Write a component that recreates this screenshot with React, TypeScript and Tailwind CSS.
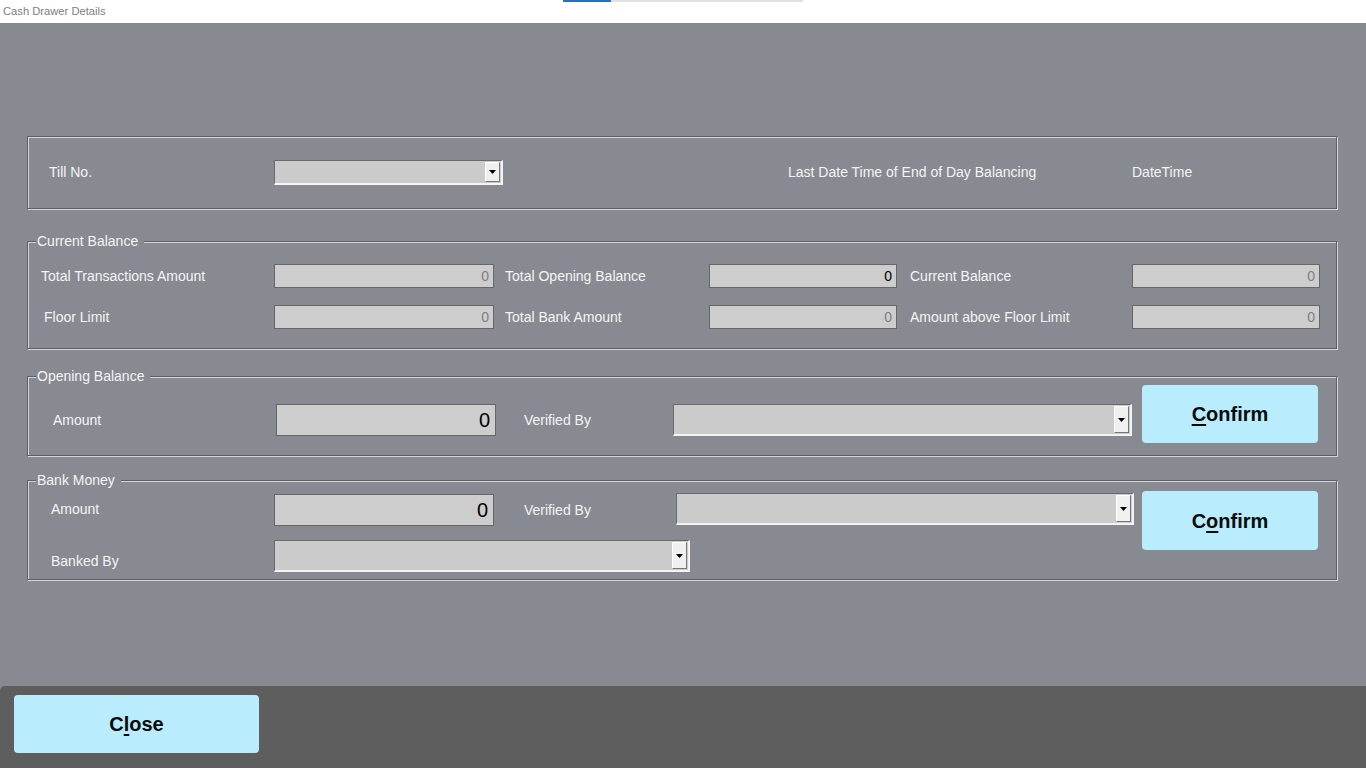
import React from "react";

const font = { fontFamily: '"Liberation Sans", Arial, sans-serif' };

function Group({ title, className, children }: { title?: string; className?: string; children: React.ReactNode }) {
  return (
    <div
      className={
        "relative border border-[#5d6066] shadow-[inset_1px_1px_0_#d4d5d8,1px_1px_0_#d4d5d8] " + (className || "")
      }
    >
      {title && (
        <span className="absolute left-[8px] top-[-9px] bg-[#878a91] pl-[1px] pr-[6px] text-[14px] leading-[16px] text-[#f4f4f4]">
          {title}
        </span>
      )}
      {children}
    </div>
  );
}

function TextBox({ w, h, value, dark, big }: { w: number; h: number; value: string; dark?: boolean; big?: boolean }) {
  return (
    <div
      className={
        "flex shrink-0 items-center justify-end border border-[#666] bg-[#cdcdcd] " +
        (big ? "pr-[5px] text-[20px] text-black" : "pr-[4px] text-[14px] " + (dark ? "text-black" : "text-[#7f7f7f]"))
      }
      style={{ width: w, height: h }}
    >
      {value}
    </div>
  );
}

function Combo({ w, h }: { w: number; h: number }) {
  return (
    <div
      className="flex shrink-0 items-stretch justify-end border-t border-l border-t-[#6a6a6a] border-l-[#6a6a6a] border-b-2 border-r-2 border-b-[#f4f4f4] border-r-[#f4f4f4] bg-[#cbcbcb] p-[1px]"
      style={{ width: w, height: h }}
    >
      <div className="flex w-[15px] items-center justify-center border-t border-l border-t-white border-l-white border-b border-r border-b-[#777] border-r-[#777] bg-[#f0f0f0]">
        <svg width="7" height="4" viewBox="0 0 7 4">
          <path d="M0 0H7L3.5 4Z" fill="#000" />
        </svg>
      </div>
    </div>
  );
}

function Label({ w, children, className }: { w: number; children: React.ReactNode; className?: string }) {
  return (
    <div className={"shrink-0 whitespace-nowrap text-[14px] text-[#f4f4f4] " + (className || "")} style={{ width: w }}>
      {children}
    </div>
  );
}

function BigButton({ w, h, children }: { w: number; h: number; children: React.ReactNode }) {
  return (
    <button
      className="flex shrink-0 items-center justify-center rounded-[4px] bg-[#b9ecfd] text-[20px] font-bold text-[#0a0a0a]"
      style={{ width: w, height: h, ...font }}
    >
      {children}
    </button>
  );
}

export default function App() {
  return (
    <div className="flex h-screen w-full flex-col overflow-hidden" style={font}>
      {/* title bar */}
      <div className="relative h-[23px] shrink-0 bg-white">
        <div className="absolute left-[563px] top-0 h-[2px] w-[48px] bg-[#2b6fbd]" />
        <div className="absolute left-[611px] top-0 h-[2px] w-[192px] bg-[#e1e1e1]" />
        <div className="pl-[3px] pt-[4px] text-[11.2px] leading-[14px] text-[#808080]">Cash Drawer Details</div>
      </div>

      {/* main */}
      <div className="flex flex-1 flex-col bg-[#878a91] pl-[27px] pt-[113px]">
        {/* Till row */}
        <Group className="h-[73px] w-[1310px]">
          <div className="flex h-full items-center pl-[21px] pb-[1px]">
            <Label w={225}>Till No.</Label>
            <Combo w={229} h={25} />
            <div className="w-[285px] shrink-0" />
            <Label w={344}>Last Date Time of End of Day Balancing</Label>
            <Label w={100}>DateTime</Label>
          </div>
        </Group>

        {/* Current Balance */}
        <Group title="Current Balance" className="mt-[32px] h-[108px] w-[1310px]">
          <div className="flex flex-col gap-[17px] pl-[13px] pt-[22px]">
            <div className="flex h-[24px] items-center">
              <Label w={233}>Total Transactions Amount</Label>
              <TextBox w={220} h={24} value="0" />
              <Label w={215} className="pl-[11px]">Total Opening Balance</Label>
              <TextBox w={188} h={24} value="0" dark />
              <Label w={235} className="pl-[13px]">Current Balance</Label>
              <TextBox w={188} h={24} value="0" />
            </div>
            <div className="flex h-[24px] items-center">
              <Label w={233} className="pl-[3px]">Floor Limit</Label>
              <TextBox w={220} h={24} value="0" />
              <Label w={215} className="pl-[11px]">Total Bank Amount</Label>
              <TextBox w={188} h={24} value="0" />
              <Label w={235} className="pl-[13px]">Amount above Floor Limit</Label>
              <TextBox w={188} h={24} value="0" />
            </div>
          </div>
        </Group>

        {/* Opening Balance */}
        <Group title="Opening Balance" className="mt-[27px] h-[80px] w-[1310px]">
          <div className="flex items-start pl-[25px] pt-[8px]">
            <div className="mt-[19px] flex h-[32px] items-center">
              <Label w={223}>Amount</Label>
              <TextBox w={220} h={32} value="0" big />
              <Label w={177} className="pl-[28px]">Verified By</Label>
              <Combo w={459} h={32} />
            </div>
            <div className="ml-[10px]">
              <BigButton w={176} h={58}>
                <span>
                  <span className="underline decoration-[2px] underline-offset-[3px]">C</span>onfirm
                </span>
              </BigButton>
            </div>
          </div>
        </Group>

        {/* Bank Money */}
        <Group title="Bank Money" className="mt-[24px] h-[100px] w-[1310px]">
          <div className="flex items-start pl-[23px] pt-[10px]">
            <div className="flex flex-col">
              <div className="mt-[3px] flex h-[32px] items-center">
                <Label w={223} className="pb-[2px]">Amount</Label>
                <TextBox w={220} h={32} value="0" big />
                <Label w={182} className="pl-[30px]">Verified By</Label>
                <div className="-mt-[2px]">
                  <Combo w={458} h={32} />
                </div>
              </div>
              <div className="mt-[14px] flex h-[32px] items-center">
                <Label w={223} className="pt-[10px]">Banked By</Label>
                <Combo w={416} h={32} />
              </div>
            </div>
            <div className="ml-[8px]">
              <BigButton w={176} h={59}>
                <span>
                  C<span className="underline decoration-[2px] underline-offset-[3px]">o</span>nfirm
                </span>
              </BigButton>
            </div>
          </div>
        </Group>
      </div>

      {/* bottom bar */}
      <div className="h-[82px] shrink-0 bg-[#878a91]">
        <div className="h-full rounded-tl-[5px] bg-[#5e5e5e] pl-[14px] pt-[9px]">
          <BigButton w={245} h={58}>
            <span>
              C<span className="underline decoration-[2px] underline-offset-[3px]">l</span>ose
            </span>
          </BigButton>
        </div>
      </div>
    </div>
  );
}
